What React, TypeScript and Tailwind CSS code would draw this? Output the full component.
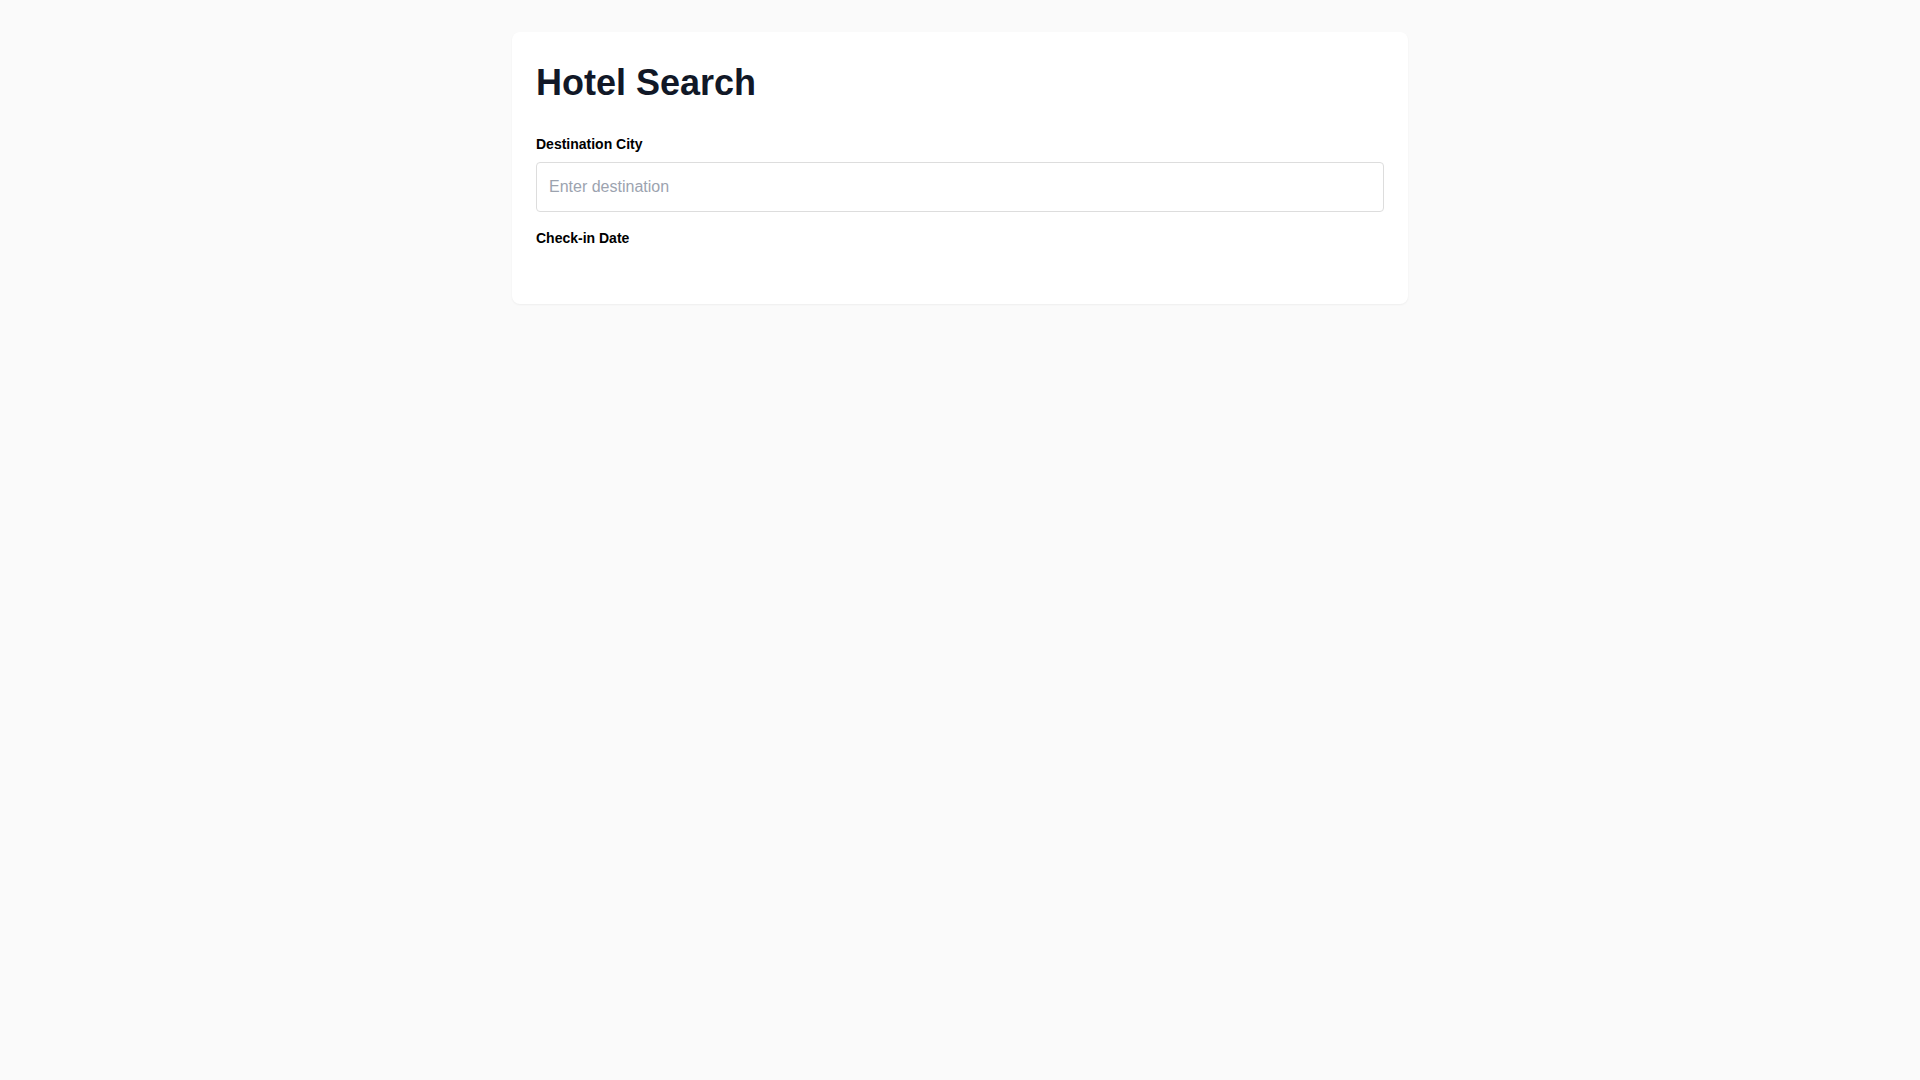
export default function App() {
  return (
    <div className="min-h-screen bg-[#fafafa] p-8 font-['Liberation_Sans',Arial,sans-serif]">
      <div className="mx-auto max-w-4xl rounded-lg bg-white px-6 pb-6 pt-6 shadow-[0_1px_2px_rgba(0,0,0,0.05)]">
        <h1 className="mb-[24px] text-4xl font-bold leading-[54px] text-[#111827]">Hotel Search</h1>

        <label className="mb-2 block text-sm font-bold leading-5 text-black">Destination City</label>
        <input
          type="text"
          placeholder="Enter destination"
          className="mb-4 block w-full rounded border border-[#dddddd] px-3 py-3 text-base leading-6 text-gray-900 placeholder:text-[#9ca3af] outline-none"
        />

        <label className="mb-2 block text-sm font-bold leading-5 text-black">Check-in Date</label>
        <div className="h-6" />
      </div>
    </div>
  );
}
